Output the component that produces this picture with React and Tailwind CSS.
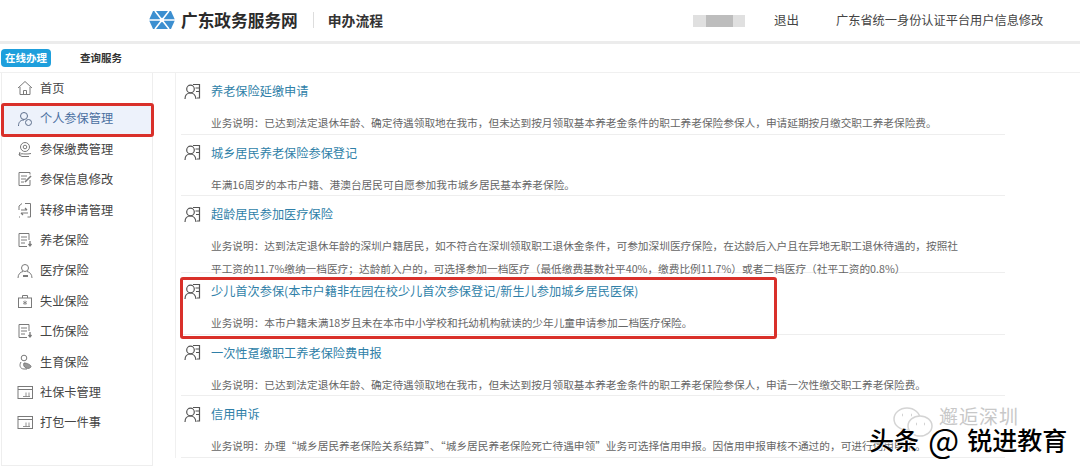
import React from 'react'

const font = { fontFamily: '"Noto Sans CJK SC", "Liberation Sans", sans-serif' }

function Svg({ children, className = 'w-[16px] h-[16px]' }) {
  return (
    <svg viewBox="0 0 16 16" fill="none" stroke="#7a7a7a" strokeWidth="1" className={className + ' shrink-0'}>
      {children}
    </svg>
  )
}

const icons = {
  home: <><path d="M1 8 8 1.500 15 8" /><path d="M3 7v7.500h10V7" /><path d="M6.500 14.500v-4h3v4" /></>,
  user: <g stroke="#5d6f8c"><circle cx="7" cy="5" r="3.500" /><path d="M1.500 15c0-4 2-6 5.500-6" /><circle cx="11.500" cy="11.500" r="3" /></g>,
  pay: <><circle cx="8" cy="6" r="4.500" /><circle cx="8" cy="6" r="1.800" /><path d="M2 14c2-2 4-1 6-1s4 0 6-.5" /><path d="M3 11l-1 3 3 1.500h7" /></>,
  edit: <><path d="M13 9v5.500H2v-13h11v2" /><path d="M4 5h6M4 8h5M4 11h3" /><path d="M8 11l6-6" strokeWidth="1.600" /></>,
  transfer: <><path d="M8 1.500h5.500V15h-3" /><path d="M2 8V4l3-2.500" /><path d="M2 15h1" /><path d="M4 8h6M8 6l2 2M11 11H4M6 13l-2-2" strokeWidth="1.200" /></>,
  doc: <><path d="M12 8V1.500H2v13h8" /><path d="M4 5h6M4 8h6M4 11h4" /><path d="M13 9v5M11.500 12l1.500 2 1.500-2" strokeWidth="1.300" /></>,
  medical: <><circle cx="8" cy="5" r="3.500" /><path d="M1 15c0-4 2.500-6 5-6.500M15 15c0-4-2.500-6-5-6.500" /><path d="M6 13h5" strokeWidth="2" /></>,
  case: <><rect x="1.500" y="5" width="13" height="9.500" /><path d="M5.500 5V2.500h5V5" /><path d="M8 7.500v4.500M6 8.500l4 2.500M10 8.500l-4 2.500" strokeWidth=".8" /></>,
  baby: <><circle cx="7" cy="4" r="2.800" /><path d="M4 8c-2 3-1 7 3 7h3" /><path d="M7 9c3 0 7 2 7 3.500S11 15 9 14 6 11 7 9z" fill="#999" /></>,
  card: <><rect x="1" y="2.500" width="14.500" height="12" /><path d="M1 5.500h14.500" /><path d="M9 8.500v4M12 8.500v4M6 12.500h7" strokeWidth=".8" /></>,
}

const menu = [
  ['home', '首页'],
  ['user', '个人参保管理', true],
  ['pay', '参保缴费管理'],
  ['edit', '参保信息修改'],
  ['transfer', '转移申请管理'],
  ['doc', '养老保险'],
  ['medical', '医疗保险'],
  ['case', '失业保险'],
  ['doc', '工伤保险'],
  ['baby', '生育保险'],
  ['card', '社保卡管理'],
  ['card', '打包一件事'],
]

const services = [
  {
    title: '养老保险延缴申请',
    lines: ['业务说明：已达到法定退休年龄、确定待遇领取地在我市，但未达到按月领取基本养老金条件的职工养老保险参保人，申请延期按月缴交职工养老保险费。'],
  },
  {
    title: '城乡居民养老保险参保登记',
    lines: ['年满16周岁的本市户籍、港澳台居民可自愿参加我市城乡居民基本养老保险。'],
  },
  {
    title: '超龄居民参加医疗保险',
    lines: [
      '业务说明：达到法定退休年龄的深圳户籍居民，如不符合在深圳领取职工退休金条件，可参加深圳医疗保险，在达龄后入户且在异地无职工退休待遇的，按照社',
      '平工资的11.7%缴纳一档医疗；达龄前入户的，可选择参加一档医疗（最低缴费基数社平40%，缴费比例11.7%）或者二档医疗（社平工资的0.8%）',
    ],
  },
  {
    title: '少儿首次参保(本市户籍非在园在校少儿首次参保登记/新生儿参加城乡居民医保)',
    lines: ['业务说明：本市户籍未满18岁且未在本市中小学校和托幼机构就读的少年儿童申请参加二档医疗保险。'],
  },
  {
    title: '一次性趸缴职工养老保险费申报',
    lines: ['业务说明：已达到法定退休年龄、确定待遇领取地在我市，但未达到按月领取基本养老金条件的职工养老保险参保人，申请一次性缴交职工养老保险费。'],
  },
  {
    title: '信用申诉',
    lines: ['业务说明：办理“城乡居民养老保险关系结算”、“城乡居民养老保险死亡待遇申领”业务可选择信用申报。因信用申报审核不通过的，可进行信用申诉。'],
  },
]

function ServiceIcon() {
  return (
    <svg viewBox="0 0 17 17" fill="none" stroke="#555" strokeWidth="1.200" className="w-[17px] h-[17px] shrink-0">
      <circle cx="6.500" cy="6" r="3.800" />
      <path d="M1 16c0-4 2.500-6 5.500-6s5 2 5.500 6" />
      <path d="M9 1.500h6.500V15H13M11.500 5h4M12 8.500h3.500" />
    </svg>
  )
}

function ServiceRow({ item }) {
  return (
    <div className={`ml-[5px] border-b border-[#eeeeee] pl-[3px] pt-[7px] ${item.lines.length > 1 ? 'h-[77px]' : 'h-[61.500px]'}`}>
      <div className="flex items-center h-[22px]">
        <ServiceIcon />
        <div className="ml-[10px] text-[12.200px] leading-[22px] text-[#2f7fa8] whitespace-nowrap">{item.title}</div>
      </div>
      <div className="pl-[27px] pt-[11px] flex flex-col gap-[3px]">
        {item.lines.map((l, i) => (
          <div key={i} className="h-[20px] text-[10.680px] leading-[20px] text-[#666666] whitespace-nowrap">{l}</div>
        ))}
      </div>
    </div>
  )
}

export default function App() {
  return (
    <div className="relative w-[1080px] h-[469px] bg-white overflow-hidden" style={font}>
      <header className="h-[44px] border-b-[3px] border-[#ececec] flex items-center">
        <div className="ml-[149px] flex items-center">
          <svg viewBox="0 0 26 18" className="w-[26px] h-[18px]">
            <path d="M4 0h18l4 9-4 9H4L0 9z" fill="#3c8fd0" />
            <path d="M13 9 6 0M13 9l7-9M13 9 6 18M13 9l7 9M13 9H0M13 9h13" stroke="#fff" strokeWidth="1.600" />
            <circle cx="13" cy="9" r="2.200" fill="#fff" />
          </svg>
          <div className="ml-[6px] text-[16.700px] font-bold text-[#2b2b2b]">广东政务服务网</div>
          <div className="ml-[15px] w-px h-[16px] bg-[#dddddd]" />
          <div className="ml-[14px] text-[13.800px] font-bold text-[#333333]">申办流程</div>
        </div>
        <div className="ml-[310px] w-[52px] h-[12px] bg-[#e0e0e0] flex justify-center">
          <div className="w-[27px] h-full bg-[#bdbdbd]" />
        </div>
        <div className="ml-[29px] text-[12.500px] text-[#444444]">退出</div>
        <div className="ml-[37px] text-[12.200px] text-[#444444] whitespace-nowrap">广东省统一身份认证平台用户信息修改</div>
      </header>

      <div className="h-[29px] flex items-center border-b border-[#f0f0f0]">
        <div className="ml-[1px] w-[50px] h-[18px] rounded-[4px] bg-[#1e9fdc] text-white text-[10.500px] font-bold leading-[18px] text-center">在线办理</div>
        <div className="ml-[29px] text-[10.500px] font-bold text-[#333333]">查询服务</div>
      </div>

      <div className="flex items-start">
        <aside className="ml-[1px] w-[152px] h-[393px] border border-t-0 border-[#eeeeee]">
          {menu.map(([icon, label, active]) => (
            <div key={label} className={`h-[30.400px] flex items-center pl-[15px] ${active ? 'bg-[#edf2fb] text-[#4a6fa0]' : 'text-[#444444]'}`}>
              <Svg>{icons[icon]}</Svg>
              <span className="ml-[7px] text-[12.200px]">{label}</span>
            </div>
          ))}
        </aside>
        <main className="ml-[22px] w-[830px] border-l border-[#f0f0f0] overflow-hidden">
          {services.map(s => <ServiceRow key={s.title} item={s} />)}
        </main>
      </div>

      <div className="absolute left-[1px] top-[103px] w-[153px] h-[34px] border-[3px] border-[#d9302a] rounded-[3px]" />
      <div className="absolute left-[180px] top-[277px] w-[597px] h-[62px] border-[3px] border-[#d9302a] rounded-[3px]" />

      <svg viewBox="0 0 40 30" fill="none" stroke="#d4d4d4" strokeWidth="1.500" className="absolute left-[893px] top-[407px] w-[40px] h-[30px]">
        <ellipse cx="14" cy="12" rx="13" ry="11" />
        <ellipse cx="27" cy="19" rx="12" ry="10" fill="#fff" />
        <path d="M9 8h1M18 8h1M23 17h1M31 17h1" strokeWidth="2.500" />
      </svg>
      <div className="absolute left-[939px] top-[405px] text-[19px] leading-[22px] text-[#c8c8c8] tracking-[1px]">邂逅深圳</div>
      <div className="absolute left-[869px] top-[422px] flex items-center text-[25px] font-medium leading-[34px] text-black whitespace-nowrap [text-shadow:0_0_2px_#fff,1px_1px_1px_#fff]">
        <span>头条</span>
        <span className="ml-[9px] text-[33px] font-normal leading-[34px]">@</span>
        <span className="ml-[8px]">锐进教育</span>
      </div>
    </div>
  )
}
